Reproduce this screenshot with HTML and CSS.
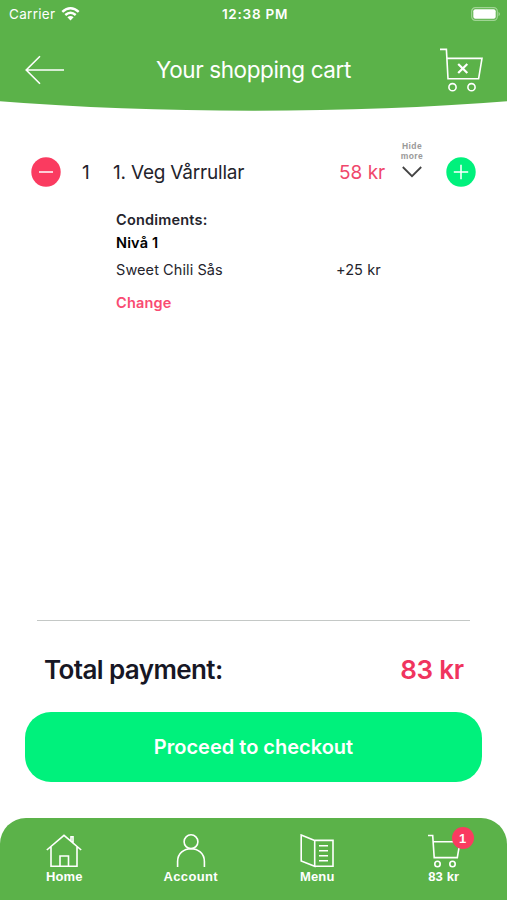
FILE: index.html
```
<!DOCTYPE html>
<html lang="en">
<head>
<meta charset="utf-8">
<title>Your shopping cart</title>
<link rel="stylesheet" href="styles.css">
</head>
<body>
<div class="app">
  <header class="header">
    <svg class="header-shape" viewBox="0 0 507 112" preserveAspectRatio="none"><path d="M0 0H507V101.3Q390 110.7 253.500 110.700Q117 110.700 0 101.300Z"/></svg>
    <div class="status">
      <div class="carrier"><span>Carrier</span>
        <svg class="wifi" width="19" height="14" viewBox="0 0 19 14"><path d="M1.300 4.900Q9.500-2.300 17.700 4.900M4.300 8Q9.500 3.500 14.700 8"/><path class="solid" d="M6.400 10.300Q9.500 7.700 12.600 10.300L9.500 13.500Z"/></svg>
      </div>
      <span class="clock">12:38 PM</span>
      <svg class="battery" width="30" height="14" viewBox="0 0 30 14"><rect class="shell" x=".7" y=".7" width="25.600" height="12.600" rx="3.600"/><rect class="charge" x="2.300" y="2.300" width="22.400" height="9.400" rx="2"/><path class="cap" d="M27.500 4.700Q30.500 7 27.500 9.300Z"/></svg>
    </div>
    <div class="titlebar">
      <svg class="line-icon" width="40" height="30" viewBox="0 0 40 30"><path d="M39 15H1.500M15 1.300L1.200 15L15 28.700"/></svg>
      <h1>Your shopping cart</h1>
      <svg class="line-icon" width="44" height="46" viewBox="0 0 44 46"><path d="M1 2.400H7.400L9 31.800H39.600L43 11.400H8"/><circle cx="13.500" cy="40.200" r="3.600"/><circle cx="32.500" cy="40.200" r="3.600"/><path class="bold" d="M19.200 17L28.300 26M28.300 17L19.200 26"/></svg>
    </div>
  </header>

  <main class="cart">
    <div class="item">
      <svg class="round minus" width="30" height="30" viewBox="0 0 30 30"><circle cx="15" cy="15" r="14.700"/><path d="M8 15H22"/></svg>
      <span class="qty">1</span>
      <span class="name">1. Veg Vårrullar</span>
      <span class="price">58 kr</span>
      <div class="toggle"><span>Hide<br>more</span><svg width="20" height="12" viewBox="0 0 20 12"><path d="M.8 1L10 10.200L19.200 1"/></svg></div>
      <svg class="round plus" width="30" height="30" viewBox="0 0 30 30"><circle cx="15" cy="15" r="14.700"/><path d="M7.800 15H22.200M15 7.800V22.200"/></svg>
    </div>
    <div class="details">
      <div class="heading">Condiments:</div>
      <div class="level">Nivå 1</div>
      <div class="option"><span class="option-name">Sweet Chili Sås</span><span class="option-price">+25 kr</span></div>
      <div class="change">Change</div>
    </div>
  </main>

  <section class="summary">
    <div class="total"><span class="total-label">Total payment:</span><span class="total-price">83 kr</span></div>
    <div class="checkout"><span>Proceed to checkout</span></div>
  </section>

  <nav class="nav">
    <div class="tab"><svg class="line-icon" width="36" height="34" viewBox="0 0 36 34"><path d="M.8 16L18 1.300L35.200 16M5 13V32.300H31V13M14 32V22H22.500V32M25 7V2.700H27V9"/></svg><span>Home</span></div>
    <div class="tab"><svg class="line-icon" width="36" height="34" viewBox="0 0 36 34"><circle cx="18" cy="7.700" r="6.900"/><path d="M4.600 33V27.500C4.600 10.500 31.400 10.500 31.400 27.500V33"/></svg><span class="wide">Account</span></div>
    <div class="tab"><svg class="line-icon" width="36" height="34" viewBox="0 0 36 34"><path d="M15.700 6.400L2.200 1V27L15.700 32.300ZM15.700 6.400H34V32.300H15.700M20 11.700H29M20 16.700H29M20 21.700H29M20 26.700H29"/></svg><span>Menu</span></div>
    <div class="tab"><svg class="line-icon" width="36" height="34" viewBox="0 0 36 34"><path d="M2 1.500H6.700L8.200 23.600H31.300L34 7.800H7"/><circle cx="11.500" cy="30" r="2.700"/><circle cx="26.500" cy="30" r="2.700"/></svg><span>83 kr</span><b class="badge">1</b></div>
  </nav>
</div>
</body>
</html>
```
FILE: styles.css
```
* { box-sizing: border-box; }
body { margin: 0; background: #fff; font-family: Inter, "Liberation Sans", sans-serif; color: #24242c; }
svg { display: block; flex: none; fill: none; }
span { white-space: nowrap; }
.app { width: 507px; height: 900px; display: flex; flex-direction: column; overflow: hidden; }

.header { position: relative; height: 112px; color: #fff; }
.header-shape { position: absolute; inset: 0; width: 100%; height: 100%; z-index: -1; fill: #5bb249; }
.status { display: grid; grid-template-columns: 1fr auto 1fr; align-items: center; height: 28px; padding: 0 6px 0 9px; font-size: 13.5px; }
.carrier { display: flex; align-items: center; gap: 6px; letter-spacing: .3px; }
.wifi { stroke: #fff; stroke-width: 2.500; }
.wifi .solid { fill: #fff; stroke: none; }
.clock { font-weight: 600; letter-spacing: .75px; padding-bottom: 1px; }
.battery { justify-self: end; margin-bottom: 1px; }
.shell { stroke: #a0d494; stroke-width: 1.200; }
.charge { fill: #fff; }
.cap { fill: #a0d494; }
.titlebar { display: flex; align-items: center; justify-content: space-between; height: 84px; padding: 0 24px 0 25px; }
.line-icon { stroke: #fff; stroke-width: 1.600; }
.line-icon .bold { stroke-width: 2.200; }
h1 { margin: 0; padding: 0 0 2px 3px; font-size: 22.5px; font-weight: 400; letter-spacing: -.4px; }

.cart { flex: 1; padding: 28px 31px 0; }
.item { display: flex; align-items: center; height: 64px; font-size: 19px; }
.round { stroke: #fff; stroke-width: 1.500; }
.round circle { stroke: none; }
.minus circle { fill: #fa3b60; }
.plus circle { fill: #00f17c; }
.qty { width: 52px; padding-left: 21px; }
.name { width: 226px; letter-spacing: -.2px; }
.price { width: 63px; color: #f0476b; }
.toggle { width: 20px; height: 64px; padding-top: 1px; display: flex; flex-direction: column; align-items: center; gap: 5px; color: #999; font: bold 8.5px/10px "Liberation Sans", sans-serif; letter-spacing: .4px; text-align: center; }
.toggle svg { stroke: #444; stroke-width: 1.800; }
.plus { margin-left: 24px; }
.details { padding: 4px 0 0 85px; font-size: 14.5px; line-height: 24px; }
.heading { font-weight: 600; letter-spacing: .2px; }
.level { font-weight: 600; color: #000; line-height: 22px; letter-spacing: .15px; }
.option { display: flex; padding-top: 3px; line-height: 26px; letter-spacing: .08px; }
.option-name { width: 220px; }
.change { margin-top: 8px; font-weight: 600; color: #f94b72; letter-spacing: .2px; }

.summary { padding: 0 25px; height: 198px; }
.total { margin: 0 12px; height: 92px; padding: 5px 6px 0 7px; display: flex; justify-content: space-between; align-items: center; border-top: 1px solid #c4c8c6; font-size: 26px; font-weight: 600; color: #171725; }
.total-label { letter-spacing: -.6px; }
.total-price { color: #f0345e; letter-spacing: -.2px; }
.checkout { height: 70px; display: flex; align-items: center; justify-content: center; background: #00f17c; border-radius: 26px; color: #fff; font-size: 20px; font-weight: 600; }

.nav { height: 82px; display: grid; grid-template-columns: repeat(4, 1fr); padding: 16px 0 0 1px; background: #5bb249; border-radius: 26px 26px 0 0; color: #fff; font: bold 13px/16px "Liberation Sans", sans-serif; }
.tab { position: relative; display: flex; flex-direction: column; align-items: center; }
.tab span { padding-top: 1px; letter-spacing: .15px; }
.tab .wide { letter-spacing: .35px; }
.badge { position: absolute; left: 71px; top: -7px; width: 22px; height: 22px; border-radius: 50%; background: #fa3b60; text-align: center; line-height: 23px; }
```
